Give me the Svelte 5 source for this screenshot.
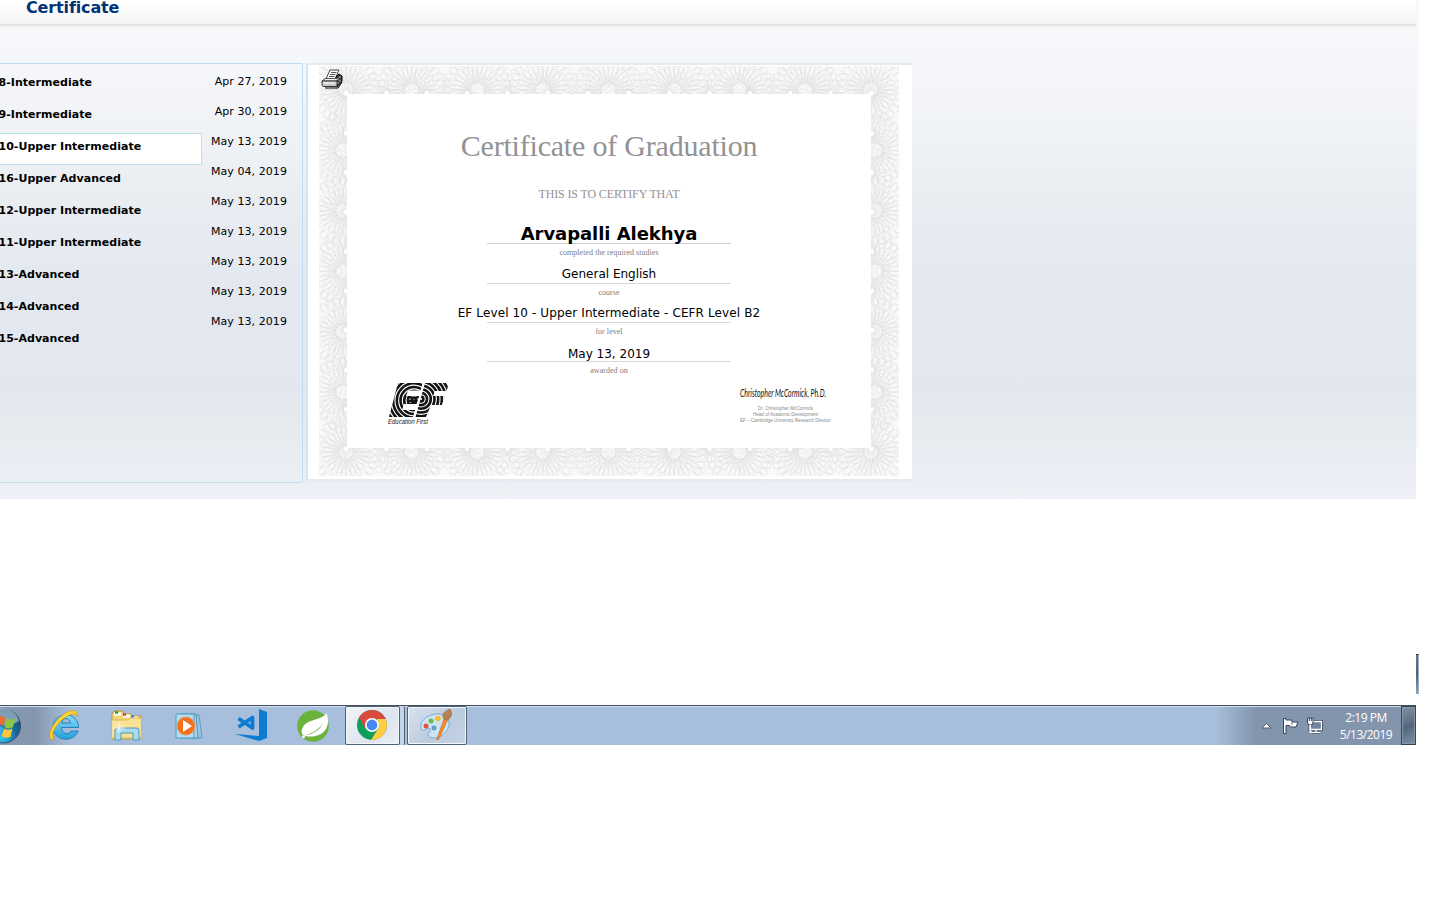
<script>
  const levels = ['8-Intermediate', '9-Intermediate', '10-Upper Intermediate', '16-Upper Advanced', '12-Upper Intermediate', '11-Upper Intermediate', '13-Advanced', '14-Advanced', '15-Advanced'];
  const dates = ['Apr 27, 2019', 'Apr 30, 2019', 'May 13, 2019', 'May 04, 2019', 'May 13, 2019', 'May 13, 2019', 'May 13, 2019', 'May 13, 2019', 'May 13, 2019'];

  // Rosettes follow the inner edge of the guilloche frame.
  const fans = [];
  for (let i = 0; i <= 8; i++) {
    const x = 27 + i * 65.6;
    fans.push([x, 24], [x, 386]);
  }
  for (let i = 1; i < 6; i++) {
    const y = 24 + i * 60.4;
    fans.push([24, y], [556, y]);
  }
  const dots = [];
  for (let i = 0; i <= 13; i++) dots.push([27 + i * 40.4, 27], [27 + i * 40.4, 383]);
  for (let i = 1; i < 9; i++) dots.push([27, 28 + i * 39.4], [553, 28 + i * 39.4]);
  const petals = Array.from({ length: 28 }, (_, i) => (i * 360) / 28);
  const rays = Array.from({ length: 18 }, (_, i) => i * 20);
  const rings = Array.from({ length: 8 }, (_, i) => 2.4 + i * 3.7);
</script>

<div class="screen">
  <div class="main">
    <section class="page">
      <header><h1>Certificate</h1></header>
      <div class="columns">
        <aside>
          <ul class="levels">
            {#each levels as level, i}
              <li class:selected={i === 2}>{level}</li>
            {/each}
          </ul>
          <ul class="dates">
            {#each dates as date}<li>{date}</li>{/each}
          </ul>
        </aside>
        <article>
          <svg class="frame" width="580" height="410" viewBox="0 0 580 410">
            <defs>
              <clipPath id="band"><path clip-rule="evenodd" d="M0 0H580V410H0ZM28 28V382H552V28Z" /></clipPath>
              <g id="fan" fill="none" stroke="#dcdcdf" stroke-width=".5">
                {#each petals as a}<ellipse cx="0" cy="-21" rx="4.500" ry="14" transform="rotate({a})" />{/each}
              </g>
              <g id="weave" fill="none" stroke="#e2e2e4" stroke-width=".4">
                {#each rays as a}<ellipse cx="0" cy="-14" rx="6" ry="11" transform="rotate({a})" />{/each}
              </g>
            </defs>
            <g clip-path="url(#band)">
              <rect width="580" height="410" fill="#f9f9fa" />
              {#each dots as [x, y]}<use href="#weave" {x} {y} />{/each}
              {#each fans as [x, y]}<use href="#fan" {x} {y} />{/each}
            </g>
            {#each dots as [x, y]}<circle cx={x} cy={y} r="1.800" fill="#fff" />{/each}
          </svg>
          <svg class="printer" width="22" height="20" viewBox="0 0 22 20">
            <path d="M5 10 9 1H18L14 10Z" fill="#fff" stroke="#444" />
            <path d="M10 3.500H15.500M9 5.500H14.500M8 7.500H13.500" stroke="#555" />
            <path d="M15 8 18 5 21 7V12L16 18V11Z" fill="#444" stroke="#000" />
            <path d="M1 12 4 9.500H17L15.500 12Z" fill="#eee" stroke="#555" />
            <path d="M1 12H16V17.500H2L1 16Z" fill="#c8cbc4" stroke="#333" />
            <path d="M2 14H14" stroke="#fff" /><path d="M4 19H17L21 13" fill="none" stroke="#000" />
            <path d="M17 9V11M19 7V9M17 13V15M19 11V13" stroke="#aaa" />
          </svg>
          <div class="body">
            <h2>Certificate of Graduation</h2>
            <p class="certify">THIS IS TO CERTIFY THAT</p>
            <p class="name">Arvapalli Alekhya</p>
            <p class="note n1">completed the required studies</p>
            <p class="value v1">General English</p>
            <p class="note n2">course</p>
            <p class="value v2">EF Level 10 - Upper Intermediate - CEFR Level B2</p>
            <p class="note n3">for level</p>
            <p class="value v3">May 13, 2019</p>
            <p class="note n4">awarded on</p>
          </div>
          <div class="foot">
            <svg width="64" height="44" viewBox="0 0 64 44">
              <defs>
                <clipPath id="ebar"><path d="M10 1H34.500L32.500 8.500H20L18 14H31L28.500 22H16L14 28H27L25 35H1Z" /></clipPath>
                <clipPath id="fbar"><path d="M37 1H61L58.500 9H47L45 14H56.500L54 23H43L38 35H27.500Z" /></clipPath>
              </defs>
              <g clip-path="url(#ebar)" fill="none" stroke="#141414" stroke-width="2.600">
                {#each rings as r}<circle cx="26" cy="18.500" {r} />{/each}
                <path d="M19 15.500H36M19 19H36M19 22H36" stroke-width="1.800" />
              </g>
              <g clip-path="url(#fbar)" fill="none" stroke="#141414" stroke-width="2.600">
                {#each rings as r}<circle cx="33" cy="17" {r} />{/each}
              </g>
              <text x="0" y="42" textLength="40" lengthAdjust="spacingAndGlyphs" class="tag">Education First</text>
            </svg>
            <div class="sign">
              <svg width="94" height="23" viewBox="0 0 94 23">
                <text class="ink" x="1" y="14.500" textLength="86" lengthAdjust="spacingAndGlyphs">Christopher McCormick, Ph.D.</text>
              </svg>
              <svg width="94" height="18" viewBox="0 0 94 18" class="small">
                <text x="19" y="5" textLength="55">Dr. Christopher McCormick</text>
                <text x="14" y="11" textLength="65">Head of Academic Development</text>
                <text x="1" y="17" textLength="91">EF – Cambridge University Research Director</text>
              </svg>
            </div>
          </div>
        </article>
      </div>
    </section>

    <footer class="taskbar">
      <div class="start">
        <svg width="22" height="40" viewBox="0 0 22 40">
          <defs>
            <radialGradient id="orb" cx=".45" cy=".85" r=".85"><stop offset="0" stop-color="#32c8ee" /><stop offset=".5" stop-color="#146b9f" /><stop offset="1" stop-color="#1c4667" /></radialGradient>
          </defs>
          <circle cx="3.500" cy="20" r="17" fill="url(#orb)" stroke="#31506e" />
          <path d="M-14 15A17 17 0 0 1 19 15Q10 21 0 18Z" fill="#c0d2df" opacity=".6" />
          <path d="M-6 12Q0 8 5.500 12L3.500 20.500Q-2 16-8 20Z" fill="#ed6b34" />
          <path d="M6.500 12.500Q11 15 15.500 12L13 21Q9 24 4.500 21Z" fill="#8dc63f" />
          <path d="M4 22.500Q8 25 12.500 22.500L10.500 31Q6 33 1.500 30Z" fill="#fbc739" />
          <path d="M-8 22Q-2 18 3 22L.5 30Q-4 27-9 29Z" fill="#45a9e8" />
        </svg>
      </div>
      <svg class="icon ie" width="32" height="34" viewBox="0 0 32 34">
        <defs><linearGradient id="blue" x2="0" y2="1"><stop stop-color="#88dcfa" /><stop offset="1" stop-color="#219fda" /></linearGradient></defs>
        <path d="M29.500 18.500H12.500C12.500 25.500 20 26 22 22H29C25 34 5 33 4 18.500 4 2 30 2 29.500 18.500ZM12.500 14H21.500C20.500 8 13.500 8 12.500 14Z" fill="url(#blue)" stroke="#277fb9" />
        <path d="M3 31C-3 27 4 13 15 5 23 0 29 0 28.500 8 27 3 21 4.500 14 10 6 17 1 26 5 30Z" fill="#ffd62f" stroke="#d49b17" stroke-width=".8" />
      </svg>
      <svg class="icon folder" width="34" height="32" viewBox="0 0 34 32">
        <path d="M2 29V4L4 1H12L14 4H21L23 6H31V29Z" fill="#f4d676" stroke="#bb9343" />
        <path d="M4 4H11M13 6H20M21 8H28" stroke="#fff" stroke-width="3" />
        <path d="M5 2.500h3" stroke="#18a827" stroke-width="2.500" /><path d="M13 4.500h3" stroke="#d04930" stroke-width="2.500" /><path d="M21 6.500h3" stroke="#2793d8" stroke-width="2.500" />
        <path d="M1.500 10H18L20 8H31.500V28H1.500Z" fill="#f8e297" stroke="#d9b85d" />
        <path d="M5 30V20Q5 18 8 18H26Q29 18 29 20V30H23V23H11V30Z" fill="#a6daec" stroke="#4c9abc" />
        <path d="M9 12V23M3 18H15" stroke="#fff" opacity=".85" /><path d="M6 15 12 21M12 15 6 21" stroke="#fff" opacity=".7" />
      </svg>
      <svg class="icon media" width="31" height="28" viewBox="0 0 31 28">
        <path d="M10 3H24L27 26H14Z" fill="#9ac5dc" stroke="#559fc4" /><path d="M5 2H21L23 26H5Z" fill="#abd4e8" stroke="#4796bf" />
        <path d="M1 2H19V26H1Z" fill="#b6dced" stroke="#4f9bc2" /><circle cx="11" cy="14" r="9" fill="#f5711c" stroke="#dd9b6b" />
        <path d="M8 8V20L17 14Z" fill="#fff" />
      </svg>
      <svg class="icon code" width="33" height="33" viewBox="0 0 33 33">
        <path d="M24 0 32 3V29L24 32 0 25 24 27Z" fill="#0c7bd0" /><path d="M3.500 9.500 17.500 19V8.500L3.500 18" stroke="#0c7bd0" stroke-width="3.800" fill="none" stroke-linejoin="round" />
      </svg>
      <svg class="icon leaf" width="32" height="32" viewBox="0 0 32 32">
        <circle cx="16" cy="16" r="15.800" fill="#6cb33e" /><path d="M29.500 3C26 10 10 9 6 17 3 22 5 25 8 26 17 28 26 25 29.500 18 32 13 31 7 29.500 3Z" fill="#fff" />
        <path d="M8 25.500Q20 22 26.500 13Q21 23.500 8 25.500Z" fill="#6cb33e" /><circle cx="6.500" cy="26.800" r="1.500" fill="#fff" />
      </svg>
      <div class="task active">
        <svg width="32" height="32" viewBox="0 0 32 32">
          <circle cx="16" cy="16" r="15" fill="#0e9e5b" />
          <path d="M3 8.500A15 15 0 0 1 29 8.500L30 10H16L9.500 20Z" fill="#db4a3e" />
          <path d="M29.700 10A15 15 0 0 1 15 31L22.500 19 21 10Z" fill="#ffcd42" />
          <circle cx="16" cy="16" r="7" fill="#fff" /><circle cx="16" cy="16" r="5.400" fill="#4688f4" />
        </svg>
      </div>
      <div class="stack"></div>
      <div class="task paint">
        <svg width="34" height="32" viewBox="0 0 34 32">
          <path d="M17 5C29 4 33 13 28 21 23 30 11 31 9 26 8 23 13 24 11 20 9 17 5 24 2 20 0 13 7 6 17 5Z" fill="#cbe5f3" stroke="#7dadd0" />
          <circle cx="7" cy="17" r="2.500" fill="#e65042" /><circle cx="12" cy="12" r="2.500" fill="#6eb946" /><circle cx="19" cy="9.500" r="2.800" fill="#f3bf2d" /><circle cx="15" cy="19" r="2" fill="#77acd1" stroke="#498ab8" />
          <path d="M17.500 31 25 10 28.500 11 20 30Z" fill="#f48a31" stroke="#d56b25" stroke-width=".7" /><path d="M25 10C22 5 25 3 31 0 34 5 32 8 29 11Z" fill="#b78252" stroke="#936138" stroke-width=".6" />
        </svg>
      </div>
      <div class="tray">
        <svg width="62" height="18" viewBox="0 0 62 18">
          <path d="M1 11 5.500 6.500 10 11Z" fill="#fff" stroke="#4c5c72" />
          <path d="M22.500 1.500H25V3H30.500L31.500 5H37L35 10H29.500L28.500 8.500H25V16.500H22.500Z" fill="#fff" stroke="#35445a" stroke-linejoin="round" /><path d="M31 4V8" stroke="#61708a" />
          <path d="M49 4.500H60.500V12.500H49ZM55 13V15.500M51 15.500H59" fill="#8494aa" stroke="#35445a" stroke-width="3" /><path d="M49 4.500H60.500V12.500H49ZM55 13V15.500M51 15.500H59" fill="#72839b" stroke="#fff" stroke-width="1.300" />
          <path d="M46.500 1H52V6L50.500 8H48L46.500 6Z" fill="#fff" stroke="#35445a" /><path d="M48.300 1V4M50.300 1V4" stroke="#35445a" /><path d="M49.200 8V15H51" fill="none" stroke="#fff" stroke-width="1.300" />
        </svg>
        <div class="clock"><span>2:19 PM</span><span>5/13/2019</span></div>
      </div>
      <div class="desktop"></div>
    </footer>
  </div>
  <div class="side"><div class="edge"></div><div class="sliver"></div></div>
</div>

<style>
  :global(body) { background: #fff; overflow: hidden; }
  * { box-sizing: border-box; margin: 0; padding: 0; }
  .screen { width: 1440px; height: 900px; display: flex; overflow: hidden; font-family: "DejaVu Sans", Verdana, sans-serif; color: #000; }
  .main { width: 1416px; flex: none; display: flex; flex-direction: column; gap: 206px; }
  .page { height: 499px; background: linear-gradient(#f7f8fa 25px, #f5f6f9 75px, #ebeff3 180px, #e6eaf1 250px, #e2e7f0 310px, #e2e7f0 380px, #e6ebef 430px, #eaeef4 465px, #edf1f6); }
  header { height: 24px; background: linear-gradient(#fff, #f5f5f5); box-shadow: 0 1px #e0e0e1, 0 2px #e6e7e7, 0 3px #eff0f1, 0 4px #f4f5f6; padding-left: 26px; }
  h1 { font-size: 16px; line-height: 20px; position: relative; top: -2px; color: #003478; letter-spacing: -.14px; }
  .columns { display: flex; gap: 3px; padding-top: 39px; }
  aside { width: 303px; height: 420px; border: 1px solid #bce0f0; border-left: 0; display: flex; justify-content: space-between; padding: 5px 15px 0 0; }
  ul { list-style: none; white-space: nowrap; }
  .levels { width: 202px; font: bold 11px/26px "DejaVu Sans", sans-serif; letter-spacing: .03px; }
  .levels li { height: 32px; border: 1px solid transparent; border-left: 0; text-indent: -1.5px; }
  .levels li.selected { background: #fff; border-color: #bce0f0; }
  .dates { font-size: 11px; line-height: 26px; text-align: right; letter-spacing: .07px; }
  .dates li { height: 30px; }
  article { position: relative; width: 606px; height: 418px; background: #fff; border: 2px solid #e5eaf0; border-width: 2px 0 2px 2px; border-left-color: #d3e6ef; overflow: hidden; display: flex; flex-direction: column; }
  .frame { position: absolute; left: 11px; top: 1px; }
  .printer { position: absolute; left: 13px; top: 4px; }
  .body { position: relative; margin-left: 39px; width: 524px; height: 312px; text-align: center; white-space: nowrap; display: flex; flex-direction: column; align-items: center; }
  h2 { font: 30px/40px "Liberation Serif", serif; color: #929295; margin-top: 61px; letter-spacing: -.2px; }
  .certify { font: 12px/16px "Liberation Serif", serif; color: #929295; margin-top: 20px; letter-spacing: -.14px; }
  .name { font-size: 18px; line-height: 20px; font-weight: bold; margin-top: 22px; height: 20px; width: 244px; border-bottom: 1px solid #cfcfcf; letter-spacing: -.05px; }
  .note { font: 8px/10px "Liberation Serif", serif; color: #7d7d81; letter-spacing: .04px; }
  .value { width: 244px; height: 21px; font-size: 12px; line-height: 22px; border-bottom: 1px solid #d8d8dc; display: flex; justify-content: center; }
  .n1 { margin-top: 4px; }
  .v1 { margin-top: 5px; } .n2 { margin-top: 4px; }
  .v2 { margin-top: 4px; letter-spacing: .12px; } .n3 { margin-top: 4px; }
  .v3 { margin-top: 4px; line-height: 26px; } .n4 { margin-top: 4px; }
  .foot { position: relative; display: flex; justify-content: space-between; padding: 5px 79px 0 80px; }
  .foot svg { display: block; }
  .tag { font: italic 6.5px "Liberation Sans", sans-serif; fill: #222; }
  .sign { width: 94px; }
  .ink { font: italic 12px Lato, sans-serif; fill: #111; }
  .small { font: 4.5px "Liberation Sans", sans-serif; fill: #888; }
  .taskbar { height: 40px; display: flex; align-items: center; border-top: 1px solid #44505f; box-shadow: inset 0 1px #d2e0ee; background: linear-gradient(90deg, #8698b2 0, #8496ad 35px, #a7bfdc 70px, #a7bfdc 1216px, #8395ad 1256px, #8395ad); }
  .start { width: 22px; height: 39px; overflow: hidden; }
  .icon { flex: none; }
  .ie { margin-left: 27px; } .folder { margin-left: 29px; } .media { margin-left: 31px; } .code { margin-left: 29px; } .leaf { margin-left: 29px; }
  .task { flex: none; height: 39px; width: 54px; display: grid; place-items: center; border: 1px solid #526275; border-radius: 2px; background: linear-gradient(135deg, #e4ebf4, #c4d1e2 60%, #dbe4ef); box-shadow: inset 0 0 0 1px #f2f6fa; }
  .task svg { margin: -2px 2px 0 0; }
  .active { width: 55px; margin-left: 16px; background: linear-gradient(135deg, #f3f5f9, #dce4ef 60%, #ecf0f6); }
  .stack { width: 5px; height: 39px; border-right: 1px solid #526275; border-radius: 2px; background: #c5d5e7; }
  .paint { width: 60px; margin-left: 2px; background: linear-gradient(135deg, #d8e2ee, #bccbde 55%, #c4d2e4); }
  .tray { margin-left: auto; display: flex; align-items: center; gap: 16px; }
  .clock { width: 54px; color: #fff; font: 12px/17px "Open Sans", sans-serif; text-align: center; display: flex; flex-direction: column; letter-spacing: -.5px; }
  .desktop { width: 15px; height: 39px; margin-left: 8px; border: 1px solid #344556; box-shadow: inset 0 0 0 1px #8496a9; background: linear-gradient(160deg, #8292a4, #5b6c80 48%, #526477 50%, #7b91aa); }
  .side { width: 3px; display: flex; flex-direction: column; gap: 206px; }
  .edge { height: 448px; background: linear-gradient(#f5f7fb, #f8f8f8); }
  .sliver { height: 40px; border-top: 1px solid #24303f; border-right: 1px solid #9baebf; background: linear-gradient(#66788c, #4e6073 50%, #8ba4bd); }
</style>
